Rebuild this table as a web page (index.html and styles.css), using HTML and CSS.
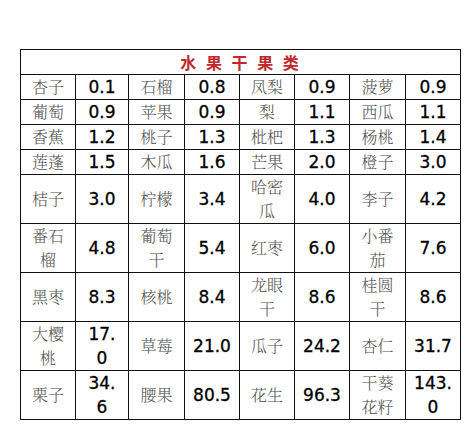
FILE: index.html
```html
<!DOCTYPE html>
<html lang="zh">
<head>
<meta charset="utf-8">
<link rel="stylesheet" href="styles.css">
</head>
<body>
<table class="fruit">
  <colgroup>
    <col class="c1"><col class="c2"><col class="c3"><col class="c4">
    <col class="c5"><col class="c6"><col class="c7"><col class="c8">
  </colgroup>
  <tr class="short"><td class="title" colspan="8">水 果 干 果 类</td></tr>
  <tr class="short">
    <td class="name">杏子</td><td class="num">0.1</td>
    <td class="name">石榴</td><td class="num">0.8</td>
    <td class="name">凤梨</td><td class="num">0.9</td>
    <td class="name">菠萝</td><td class="num">0.9</td>
  </tr>
  <tr class="short">
    <td class="name">葡萄</td><td class="num">0.9</td>
    <td class="name">苹果</td><td class="num">0.9</td>
    <td class="name">梨</td><td class="num">1.1</td>
    <td class="name">西瓜</td><td class="num">1.1</td>
  </tr>
  <tr class="short">
    <td class="name">香蕉</td><td class="num">1.2</td>
    <td class="name">桃子</td><td class="num">1.3</td>
    <td class="name">枇杷</td><td class="num">1.3</td>
    <td class="name">杨桃</td><td class="num">1.4</td>
  </tr>
  <tr class="short">
    <td class="name">莲蓬</td><td class="num">1.5</td>
    <td class="name">木瓜</td><td class="num">1.6</td>
    <td class="name">芒果</td><td class="num">2.0</td>
    <td class="name">橙子</td><td class="num">3.0</td>
  </tr>
  <tr class="tall">
    <td class="name">桔子</td><td class="num">3.0</td>
    <td class="name">柠檬</td><td class="num">3.4</td>
    <td class="name">哈密瓜</td><td class="num">4.0</td>
    <td class="name">李子</td><td class="num">4.2</td>
  </tr>
  <tr class="tall">
    <td class="name">番石榴</td><td class="num">4.8</td>
    <td class="name">葡萄干</td><td class="num">5.4</td>
    <td class="name">红枣</td><td class="num">6.0</td>
    <td class="name">小番茄</td><td class="num">7.6</td>
  </tr>
  <tr class="tall">
    <td class="name">黑枣</td><td class="num">8.3</td>
    <td class="name">核桃</td><td class="num">8.4</td>
    <td class="name">龙眼干</td><td class="num">8.6</td>
    <td class="name">桂圆干</td><td class="num">8.6</td>
  </tr>
  <tr class="tall">
    <td class="name">大樱桃</td><td class="num">17.<br>0</td>
    <td class="name">草莓</td><td class="num">21.0</td>
    <td class="name">瓜子</td><td class="num">24.2</td>
    <td class="name">杏仁</td><td class="num">31.7</td>
  </tr>
  <tr class="tall">
    <td class="name">栗子</td><td class="num">34.<br>6</td>
    <td class="name">腰果</td><td class="num">80.5</td>
    <td class="name">花生</td><td class="num">96.3</td>
    <td class="name">干葵花籽</td><td class="num">143.<br>0</td>
  </tr>
</table>
</body>
</html>
```

FILE: styles.css
```css
html, body {
  margin: 0;
  padding: 0;
  background: #ffffff;
}

.fruit {
  margin: 49px 0 0 20px;
  border-collapse: collapse;
  table-layout: fixed;
  width: 440px;
  background: #ffffff;
}

.c1 { width: 55px; }
.c2 { width: 53px; }
.c3 { width: 56px; }
.c4 { width: 55px; }
.c5 { width: 55px; }
.c6 { width: 55px; }
.c7 { width: 56px; }
.c8 { width: 55px; }

.fruit td {
  border: 1px solid #111111;
  padding: 0 4px;
  text-align: center;
  vertical-align: middle;
  line-height: 24px;
}

.short td { height: 24px; }
.tall td { height: 48px; }

.title {
  font-family: "Noto Sans CJK SC", sans-serif;
  font-size: 16px;
  font-weight: 700;
  color: #c0282e;
  letter-spacing: 2px;
  word-spacing: 2px;
}

.name {
  font-family: "Noto Serif CJK SC", "Noto Sans CJK SC", serif;
  font-size: 16px;
  font-weight: 300;
  color: #505050;
}

.num {
  font-family: "DejaVu Sans", sans-serif;
  font-size: 17px;
  color: #000000;
  -webkit-text-stroke: 0.3px #000000;
}
```
